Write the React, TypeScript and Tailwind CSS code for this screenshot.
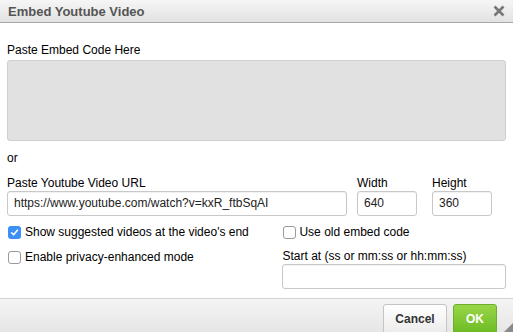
import React from 'react'

function Box({ checked }: { checked?: boolean }) {
  if (checked) {
    return (
      <span className="flex h-[13px] w-[13px] shrink-0 items-center justify-center rounded-[3px] bg-[#3b8ff6]">
        <svg width="9" height="9" viewBox="0 0 9 9">
          <path d="M1.6 4.8 L3.6 6.8 L7.4 2.2" fill="none" stroke="#fff" strokeWidth="1.6" strokeLinecap="round" strokeLinejoin="round" />
        </svg>
      </span>
    )
  }
  return <span className="h-[13px] w-[13px] shrink-0 rounded-[3px] border border-[#9a9a9a] bg-white" />
}

export default function App() {
  const input =
    'h-[25px] rounded-[3px] border border-[#c8c8c8] bg-white px-[6px] text-[12px] leading-[23px] text-[#222] shadow-[inset_0_1px_1px_rgba(0,0,0,0.06)]'

  return (
    <div className="flex h-[332px] w-[513px] flex-col overflow-hidden bg-white font-['Liberation_Sans',Arial,sans-serif] text-[12px] text-black">
      {/* Titlebar */}
      <div className="flex h-[23px] shrink-0 items-center justify-between border-b border-[#a9a9a9] bg-gradient-to-b from-[#f6f6f6] to-[#e2e2e2] pl-[8px] pr-[8px]">
        <span className="text-[13px] font-bold leading-none text-[#555]">Embed Youtube Video</span>
        <svg width="12" height="12" viewBox="0 0 12 12">
          <path d="M1.5 1.5 L10.5 10.5 M10.5 1.5 L1.5 10.5" stroke="#777" strokeWidth="2.6" />
        </svg>
      </div>

      {/* Body */}
      <div className="flex-1 px-[7px] pt-[19px]">
        <div className="leading-[16px]">Paste Embed Code Here</div>
        <div className="mt-[2px] h-[81px] rounded-[3px] border border-[#cfcfcf] bg-[#e1e1e1]" />

        <div className="mt-[9px] leading-[16px]">or</div>

        <div className="mt-[9px] flex">
          <div className="flex w-[340px] flex-col">
            <span className="leading-[16px]">Paste Youtube Video URL</span>
            <div className={input}>https://www.youtube.com/watch?v=kxR_ftbSqAI</div>
          </div>
          <div className="ml-[10px] flex w-[60px] flex-col">
            <span className="leading-[16px]">Width</span>
            <div className={input}>640</div>
          </div>
          <div className="ml-[15px] flex w-[60px] flex-col">
            <span className="leading-[16px]">Height</span>
            <div className={input}>360</div>
          </div>
        </div>

        <div className="mt-[8px] flex">
          <div className="flex w-[276px] flex-col">
            <label className="flex h-[16px] items-center gap-[4px] pl-[1px]">
              <Box checked />
              <span className="leading-[16px]">Show suggested videos at the video's end</span>
            </label>
            <label className="mt-[9px] flex h-[16px] items-center gap-[4px] pl-[1px]">
              <Box />
              <span className="leading-[16px]">Enable privacy-enhanced mode</span>
            </label>
          </div>
          <div className="flex w-[224px] flex-col">
            <label className="flex h-[16px] items-center gap-[3px] pl-[1px]">
              <Box />
              <span className="leading-[16px]">Use old embed code</span>
            </label>
            <span className="mt-[9px] leading-[15px]">Start at (ss or mm:ss or hh:mm:ss)</span>
            <div className={input + ' h-[24px]'} />
          </div>
        </div>
      </div>

      {/* Footer */}
      <div className="relative flex h-[34px] shrink-0 items-start justify-end gap-[6px] border-t border-[#d2d2d2] bg-gradient-to-b from-[#f4f4f4] to-[#e6e6e6] pr-[16px] pt-[5px]">
        <button className="h-[30px] w-[64px] rounded-[3px] border border-[#c4c4c4] bg-gradient-to-b from-[#ffffff] to-[#ececec] text-[12px] font-bold text-[#333]">
          Cancel
        </button>
        <button className="h-[30px] w-[44px] rounded-[3px] border border-[#6fae2a] bg-gradient-to-b from-[#98d648] to-[#6cbb22] text-[12px] font-bold text-white">
          OK
        </button>
        <svg width="9" height="9" viewBox="0 0 9 9" className="absolute bottom-0 right-0">
          <path d="M9 0 L9 9 L0 9 Z" fill="#8a8a8a" />
        </svg>
      </div>
    </div>
  )
}
